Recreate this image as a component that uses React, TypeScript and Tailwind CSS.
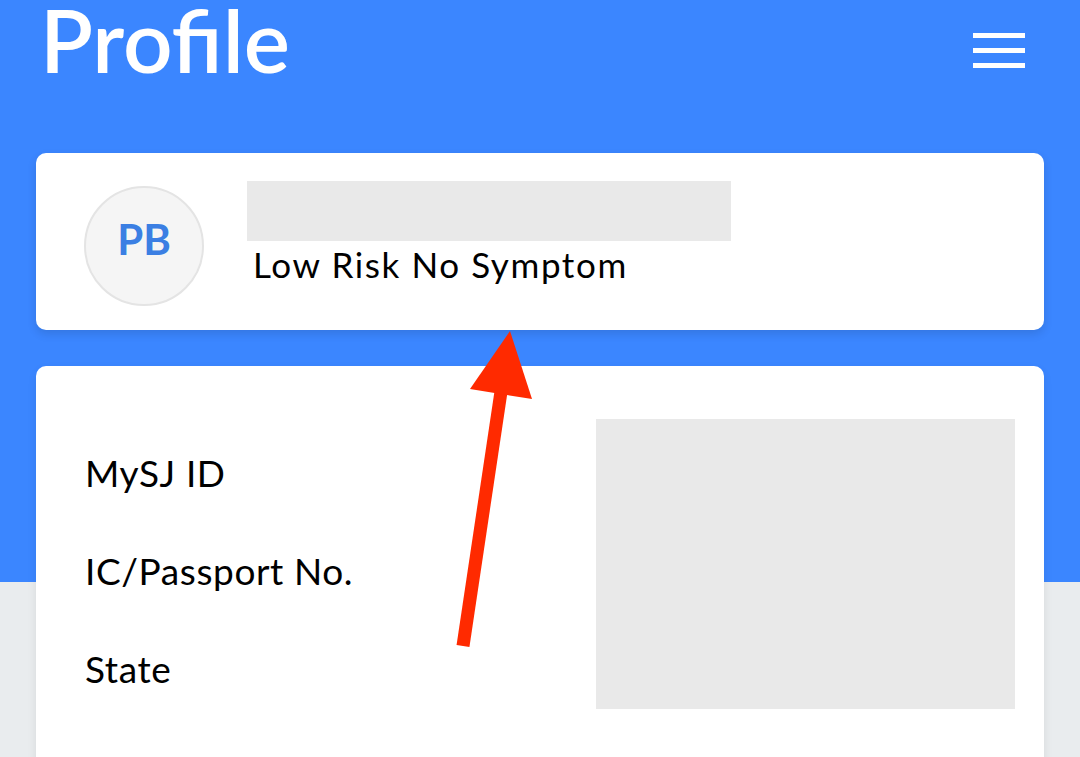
import React from "react";

export default function App() {
  return (
    <div
      className="relative w-[1080px] h-[757px] overflow-hidden bg-[linear-gradient(to_bottom,#3b86ff_0px,#3b86ff_582px,#e9ecee_582px,#e9ecee_100%)]"
      style={{ fontFamily: "Lato, 'Open Sans', sans-serif" }}
    >
      {/* Header */}
      <div className="h-[153px] pl-[40px] pr-[55px] flex justify-between items-start">
        <h1 className="text-[87px] leading-none font-semibold text-white mt-[-4px] tracking-[0px]">
          Profile
        </h1>
        <div className="mt-[33px] flex flex-col gap-[10px]">
          <div className="w-[52px] h-[5px] bg-white" />
          <div className="w-[52px] h-[5px] bg-white" />
          <div className="w-[52px] h-[5px] bg-white" />
        </div>
      </div>

      {/* Profile card */}
      <div className="mx-[36px] h-[177px] bg-white rounded-[10px] shadow-[0_4px_10px_rgba(0,0,0,0.12)] flex items-start pl-[48px]">
        <div className="mt-[33px] w-[120px] h-[120px] rounded-full bg-[#f5f5f5] border-2 border-[#e4e4e4] flex items-center justify-center">
          <span className="text-[42px] font-bold text-[#3b7fe3] leading-none mb-[14px]">PB</span>
        </div>
        <div className="ml-[43px] mt-[28px] flex flex-col">
          <div className="w-[484px] h-[60px] bg-[#e9e9e9]" />
          <div className="mt-[3px] ml-[6px] text-[35px] leading-[40px] tracking-[1.6px] text-black">
            Low Risk No Symptom
          </div>
        </div>
      </div>

      {/* Details card */}
      <div className="mx-[36px] mt-[36px] h-[420px] bg-white rounded-[10px] shadow-[0_4px_10px_rgba(0,0,0,0.08)] flex justify-between items-start">
        <div className="pt-[58px] pl-[49px] flex flex-col text-[37px] leading-[98px] tracking-[0.6px] text-black">
          <div>MySJ ID</div>
          <div>IC/Passport No.</div>
          <div>State</div>
        </div>
        <div className="mt-[53px] mr-[29px] w-[419px] h-[290px] bg-[#e9e9e9]" />
      </div>

      {/* Red annotation arrow */}
      <svg
        className="absolute left-0 top-0 pointer-events-none"
        width="1080"
        height="757"
        viewBox="0 0 1080 757"
      >
        <line x1="463" y1="646" x2="502" y2="385" stroke="#ff2a00" strokeWidth="13" />
        <polygon points="510,331 470,389 532,399" fill="#ff2a00" />
      </svg>
    </div>
  );
}
